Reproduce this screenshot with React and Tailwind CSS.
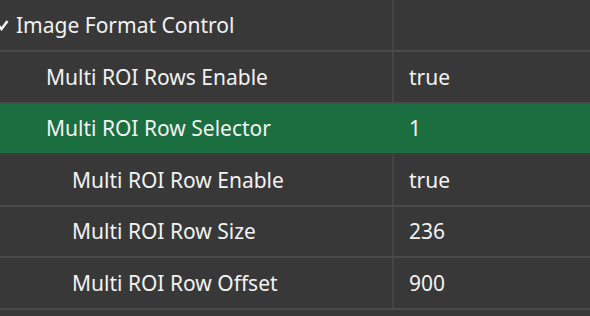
import React from 'react';

const rows = [
  { label: 'Multi ROI Rows Enable', value: 'true', depth: 1 },
  { label: 'Multi ROI Row Selector', value: '1', depth: 1, selected: true },
  { label: 'Multi ROI Row Enable', value: 'true', depth: 2 },
  { label: 'Multi ROI Row Size', value: '236', depth: 2 },
  { label: 'Multi ROI Row Offset', value: '900', depth: 2 },
];

const App = () => {
  return (
    <div
      className="w-[590px] h-[316px] overflow-hidden bg-[#383838] text-[#f2f2f2] text-[21px]"
      style={{ fontFamily: '"Noto Sans", "Open Sans", sans-serif' }}
    >
      {/* Category header */}
      <div className="flex h-[52px] border-b-2 border-[#4a4a4a]">
        <div className="w-[394px] flex items-center border-r-2 border-[#444444] pl-[16px] relative">
          <svg className="absolute left-[-3px] top-[19px]" width="12" height="12" viewBox="0 0 12 12">
            <polyline points="1,6 4.5,10 10.5,2" fill="none" stroke="#f2f2f2" strokeWidth="2.6" />
          </svg>
          <span className="mt-[1px]">Image Format Control</span>
        </div>
        <div className="flex-1" />
      </div>

      {rows.map(row => (
        <div
          key={row.label}
          className={`flex h-[51.5px] border-b-2 ${row.selected ? 'bg-[#1b6e3f] border-[#3c3c3c]' : 'border-[#4a4a4a]'}`}
        >
          <div
            className={`w-[394px] flex items-center ${row.selected ? '' : 'border-r-2 border-[#444444]'} ${row.depth === 2 ? 'pl-[72px]' : 'pl-[46px]'}`}
          >
            <span className="mt-[1px]">{row.label}</span>
          </div>
          <div className="flex-1 flex items-center pl-[15px]">
            <span className="mt-[1px]">{row.value}</span>
          </div>
        </div>
      ))}
    </div>
  );
};

export default App;
